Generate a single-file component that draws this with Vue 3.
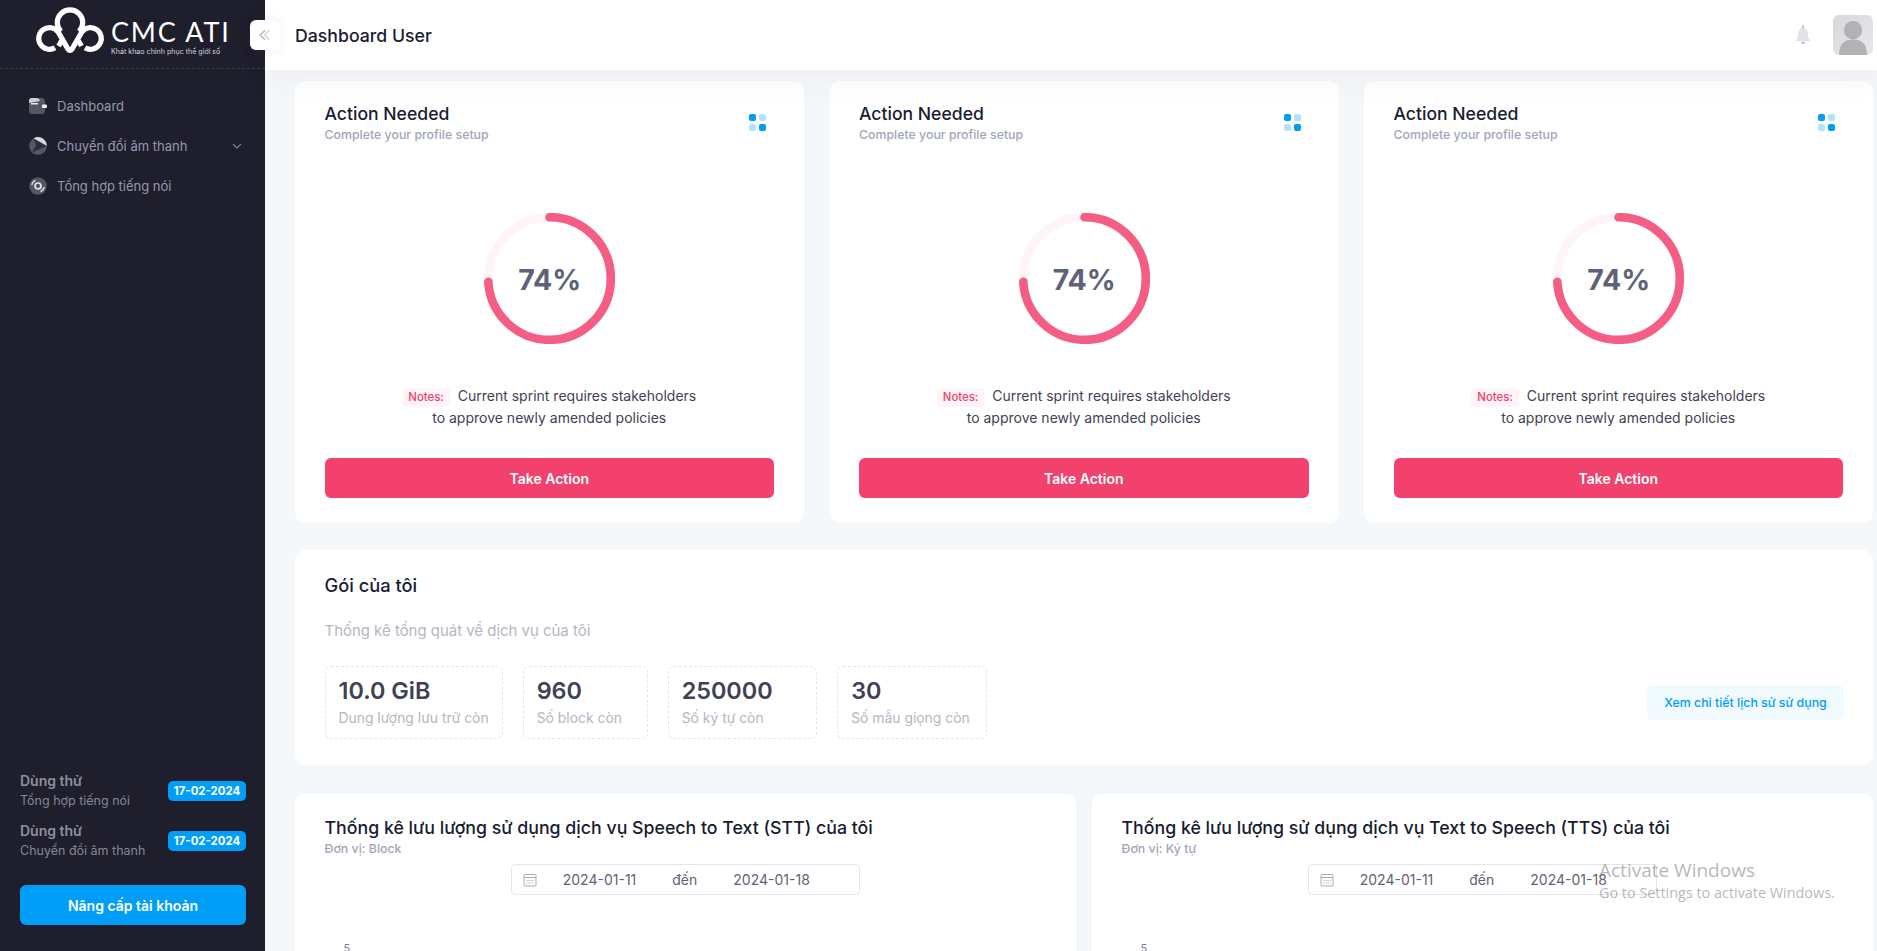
<script setup>
const actionCards = [1, 2, 3]
const stats = [
  { value: '10.0 GiB', label: 'Dung lượng lưu trữ còn' },
  { value: '960', label: 'Số block còn' },
  { value: '250000', label: 'Số ký tự còn' },
  { value: '30', label: 'Số mẫu giọng còn' }
]
const trials = [
  { title: 'Dùng thử', name: 'Tổng hợp tiếng nói', date: '17-02-2024' },
  { title: 'Dùng thử', name: 'Chuyển đổi âm thanh', date: '17-02-2024' }
]
const charts = [
  { title: 'Thống kê lưu lượng sử dụng dịch vụ Speech to Text (STT) của tôi', unit: 'Đơn vị: Block' },
  { title: 'Thống kê lưu lượng sử dụng dịch vụ Text to Speech (TTS) của tôi', unit: 'Đơn vị: Ký tự' }
]
const radius = 61.3
const circumference = 2 * Math.PI * radius
const dash = `${circumference * 0.74} ${circumference}`
</script>

<template>
  <div class="app">
    <aside class="sidebar">
      <div class="brand">
        <svg class="logo-mark" viewBox="0 0 66 44" fill="none" stroke="#fff" stroke-width="5.2" stroke-linecap="butt">
          <path d="M24 22.5 A12.7 12.7 0 1 1 42 22.5" />
          <path d="M18 38.8 A10.8 10.8 0 1 1 21 22.8 L31 40 Q33 43 35 40 L45 22.8 A10.8 10.8 0 1 1 48 38.8" />
          <path d="M24.5 32 L21.5 37" />
          <path d="M41.5 32 L44.5 37" />
        </svg>
        <div class="logo-text">
          <div class="logo-name">CMC ATI</div>
          <div class="logo-slogan">Khát khao chinh phục thế giới số</div>
        </div>
      </div>
      <nav class="nav">
        <div class="nav-item">
          <svg class="nav-icon" viewBox="0 0 18 18">
            <rect x="0" y="1" width="16" height="16" rx="3.5" fill="#565766" />
            <path d="M0 6 V4 Q0 1 3 1 L8 1 Q10 1 11 4 Z" fill="#cfd0da" />
            <rect x="2" y="6" width="7" height="1.5" fill="#e7e7ec" />
            <rect x="13" y="7.5" width="5" height="3.5" rx="1" fill="#f2f2f5" />
          </svg>
          <span>Dashboard</span>
        </div>
        <div class="nav-item">
          <svg class="nav-icon" viewBox="0 0 18 18">
            <circle cx="9" cy="9" r="8.8" fill="#565766" />
            <path d="M4.5 1.4 A8.8 8.8 0 0 1 17.8 9 Z" fill="#d7d8e2" />
            <path d="M4.5 1.4 L17.8 9 L3 15.5 L7 8.5 Z" fill="#2f303d" />
          </svg>
          <span class="nav-label">Chuyển đổi âm thanh</span>
          <svg class="nav-chevron" viewBox="0 0 10 6" fill="none" stroke="#7e8093" stroke-width="1.2">
            <path d="M1 1 L5 5 L9 1" />
          </svg>
        </div>
        <div class="nav-item">
          <svg class="nav-icon" viewBox="0 0 18 18" fill="none">
            <circle cx="9" cy="9" r="8.8" fill="#565766" />
            <circle cx="9" cy="9" r="3" stroke="#e5e5ea" stroke-width="1.7" />
            <path d="M2.8 8 A6.3 6.3 0 0 1 6.5 3.4" stroke="#d7d8e2" stroke-width="1.4" />
            <path d="M15.2 10 A6.3 6.3 0 0 1 11.5 14.6" stroke="#d7d8e2" stroke-width="1.4" />
          </svg>
          <span>Tổng hợp tiếng nói</span>
        </div>
      </nav>
      <div class="side-bottom">
        <div v-for="t in trials" :key="t.name" class="trial">
          <div>
            <div class="trial-title">{{ t.title }}</div>
            <div class="trial-name">{{ t.name }}</div>
          </div>
          <span class="trial-date">{{ t.date }}</span>
        </div>
        <button class="upgrade">Nâng cấp tài khoản</button>
      </div>
    </aside>

    <div class="main">
      <header class="header">
        <button class="collapse">
          <svg viewBox="0 0 14 14" fill="none" stroke="#b5b5c3" stroke-width="1.6">
            <path d="M7 1.5 L1.5 7 L7 12.5" />
            <path d="M12 1.5 L6.5 7 L12 12.5" stroke="#cfd0dc" />
          </svg>
        </button>
        <h1 class="page-title">Dashboard User</h1>
        <div class="header-right">
          <svg class="bell" viewBox="0 0 18 22">
            <rect x="8" y="0" width="2" height="4" fill="#b9bac6" />
            <path d="M9 3 C4.5 3 3.5 7 3.5 11 C3.5 14 2 15.5 1 17 Q0.5 18 2 18 L16 18 Q17.5 18 17 17 C16 15.5 14.5 14 14.5 11 C14.5 7 13.5 3 9 3 Z" fill="#e2e3ea" />
            <rect x="7" y="19" width="4" height="1.6" rx=".8" fill="#a9aab8" />
          </svg>
          <div class="avatar">
            <svg viewBox="0 0 40 40">
              <circle cx="20" cy="15" r="9.2" fill="#b1b2b5" />
              <path d="M6 40 C6 28 12 24.5 20 24.5 C28 24.5 34 28 34 40 Z" fill="#b1b2b5" />
            </svg>
          </div>
        </div>
      </header>

      <main class="content">
        <section class="action-grid">
          <article v-for="c in actionCards" :key="c" class="card action-card">
            <div class="action-head">
              <div>
                <h2 class="card-title">Action Needed</h2>
                <p class="card-sub">Complete your profile setup</p>
              </div>
              <div class="dots">
                <i class="dot-dark"></i><i class="dot-light"></i>
                <i class="dot-light"></i><i class="dot-dark"></i>
              </div>
            </div>
            <div class="ring">
              <svg viewBox="0 0 131 131" fill="none">
                <circle cx="65.5" cy="65.5" :r="radius" stroke="#fff5f8" stroke-width="8.6" />
                <circle
                  cx="65.5" cy="65.5" :r="radius" stroke="#f45e84" stroke-width="8.6"
                  stroke-linecap="round" :stroke-dasharray="dash"
                  transform="rotate(-90 65.5 65.5)"
                />
              </svg>
              <span class="ring-value">74%</span>
            </div>
            <p class="notes">
              <span class="notes-badge">Notes:</span>
              Current sprint requires stakeholders<br />to approve newly amended policies
            </p>
            <button class="take-action">Take Action</button>
          </article>
        </section>

        <section class="card plan">
          <h2 class="card-title plan-title">Gói của tôi</h2>
          <p class="plan-sub">Thống kê tổng quát về dịch vụ của tôi</p>
          <div class="plan-row">
            <div class="stats">
              <div v-for="s in stats" :key="s.label" class="stat">
                <div class="stat-value">{{ s.value }}</div>
                <div class="stat-label">{{ s.label }}</div>
              </div>
            </div>
            <button class="history">Xem chi tiết lịch sử sử dụng</button>
          </div>
        </section>

        <section class="chart-grid">
          <article v-for="c in charts" :key="c.unit" class="card chart-card">
            <h2 class="card-title chart-title">{{ c.title }}</h2>
            <p class="card-sub chart-unit">{{ c.unit }}</p>
            <div class="date-range">
              <svg class="cal" viewBox="0 0 14 14" fill="none" stroke="#a9abb8" stroke-width="1">
                <rect x="1" y="1.5" width="12" height="11.5" rx=".5" />
                <path d="M1 4.5 H13" />
                <path d="M3.5 7.5 H10.5 M3.5 10 H10.5" stroke-dasharray="1 1" />
              </svg>
              <span>2024-01-11</span>
              <span>đến</span>
              <span>2024-01-18</span>
            </div>
            <div class="axis-label">5</div>
          </article>
        </section>
      </main>
    </div>

    <div class="activate">
      <div class="activate-title">Activate Windows</div>
      <div class="activate-sub">Go to Settings to activate Windows.</div>
    </div>
  </div>
</template>

<style>
html, body { margin: 0; overflow: hidden; }
</style>

<style scoped>
.app {
  position: relative;
  display: flex;
  height: 951px;
  overflow: hidden;
  font-family: Inter, "Noto Sans", sans-serif;
  background: #f5f8fa;
  color: #181c32;
}
h1, h2, p { margin: 0; }
button { font-family: inherit; border: 0; cursor: pointer; }

.sidebar {
  flex: 0 0 265px;
  display: flex;
  flex-direction: column;
  background: #1e1e2d;
}
.brand {
  height: 69px;
  box-sizing: border-box;
  border-bottom: 1px dashed #393945;
  display: flex;
  padding: 9px 0 0 37px;
  gap: 8px;
}
.logo-mark { width: 66px; height: 44px; overflow: visible; }
.logo-text { color: #fff; }
.logo-name {
  font-family: Lato, sans-serif;
  font-size: 27px;
  line-height: 26px;
  margin-top: 10px;
  font-weight: 400;
  letter-spacing: 1.8px;
  white-space: nowrap;
}
.logo-slogan {
  font-size: 7.1px;
  line-height: 9px;
  margin-top: 2px;
  color: #d5d5dc;
  white-space: nowrap;
}
.nav { padding-top: 17px; }
.nav-item {
  display: flex;
  align-items: center;
  height: 40px;
  padding: 0 23px 0 29px;
  color: #9899ac;
  font-size: 13px;
}
.nav-icon { width: 18px; height: 18px; margin-right: 10px; flex: none; }
.nav-label { flex: 1; }
.nav-chevron { width: 10px; height: 6px; }

.side-bottom { margin-top: auto; padding: 0 19px 26px 20px; }
.trial {
  display: flex;
  align-items: center;
  justify-content: space-between;
  margin-bottom: 9px;
  height: 41px;
}
.trial-title { font-size: 14px; font-weight: 600; color: #8e8f9e; line-height: 20px; }
.trial-name { font-size: 12.5px; color: #858696; line-height: 19px; }
.trial-date {
  background: #009ef7;
  color: #fff;
  font-size: 11.4px;
  font-weight: 700;
  border-radius: 5px;
  width: 78px;
  height: 20px;
  line-height: 20px;
  text-align: center;
}
.upgrade {
  display: block;
  width: 100%;
  height: 40px;
  margin-top: 24px;
  background: #009ef7;
  color: #fff;
  font-size: 14px;
  font-weight: 600;
  border-radius: 6px;
}

.main { flex: 1; min-width: 0; display: flex; flex-direction: column; }
.header {
  position: relative;
  z-index: 2;
  flex: 0 0 70px;
  display: flex;
  align-items: center;
  padding: 0 4px 0 30px;
  background: #fff;
  box-shadow: 0 10px 30px rgba(82, 63, 105, .05);
}
.collapse {
  position: absolute;
  left: -15px;
  top: 20px;
  width: 30px;
  height: 30px;
  padding: 0;
  background: #fff;
  border-radius: 6px;
  display: flex;
  align-items: center;
  justify-content: center;
  box-shadow: 0 0 10px rgba(76, 87, 125, .1);
}
.collapse svg { width: 12px; height: 12px; }
.page-title { font-size: 17.7px; font-weight: 500; color: #181c32; }
.header-right { margin-left: auto; display: flex; align-items: center; gap: 22px; }
.bell { width: 16px; height: 20px; }
.avatar {
  width: 40px;
  height: 40px;
  border-radius: 6px;
  overflow: hidden;
  background: linear-gradient(135deg, #d8d8da 0%, #e9e9eb 100%);
}
.avatar svg { display: block; width: 40px; height: 40px; }

.content { flex: 1; overflow: hidden; padding: 11px 4px 0 30px; }
.card { background: #fff; border-radius: 10px; }

.action-grid { display: grid; grid-template-columns: repeat(3, 1fr); gap: 25.5px; }
.action-card {
  display: flex;
  flex-direction: column;
  height: 442px;
  box-sizing: border-box;
  padding: 22px 30px 25px 29.5px;
}
.action-head { display: flex; justify-content: space-between; }
.card-title { font-size: 17.6px; font-weight: 500; line-height: 22px; color: #181c32; }
.card-sub { font-size: 12.35px; font-weight: 500; line-height: 20px; color: #a1a5b7; }
.dots {
  display: grid;
  grid-template-columns: 7px 7px;
  grid-auto-rows: 7px;
  gap: 3px;
  margin: 11px 8px 0 0;
}
.dots i { border-radius: 2px; }
.dot-dark { background: #009ef7; }
.dot-light { background: #b3e2fd; }

.ring {
  position: relative;
  width: 131px;
  height: 131px;
  margin: 68px 0 0 calc(50% - 65px);
}
.ring svg { display: block; width: 131px; height: 131px; }
.ring-value {
  position: absolute;
  inset: 0;
  display: flex;
  align-items: center;
  justify-content: center;
  padding-top: 1px;
  font-size: 28.5px;
  font-weight: 700;
  color: #5e6278;
}
.notes {
  margin-top: 41px;
  font-size: 14px;
  line-height: 21px;
  text-align: center;
  color: #3f4254;
}
.notes-badge {
  display: inline-block;
  margin-right: 4px;
  padding: 0 6px;
  line-height: 19px;
  font-size: 11.4px;
  font-weight: 500;
  color: #f1416c;
  background: #fff5f8;
  border-radius: 4px;
}
.take-action {
  margin-top: auto;
  height: 40px;
  background: #f1416c;
  color: #fff;
  font-size: 14px;
  font-weight: 600;
  border-radius: 6px;
}

.plan {
  margin-top: 27px;
  height: 215px;
  box-sizing: border-box;
  padding: 24px 29px 0 29.5px;
}
.plan-title { font-size: 18.3px; }
.plan-sub { margin-top: 24px; font-size: 14.95px; line-height: 22px; color: #b5b5c3; }
.plan-row { display: flex; align-items: center; justify-content: space-between; margin-top: 24px; }
.stats { display: flex; gap: 20px; }
.stat {
  box-sizing: border-box;
  height: 73px;
  min-width: 125px;
  padding: 9px 13px 0;
  border: 1px dashed #e4e6ef;
  border-radius: 6px;
}
.stat:nth-child(n+3) { min-width: 149.5px; }
.stat-value { font-size: 23.4px; font-weight: 600; line-height: 29px; color: #3f4254; }
.stat-label { font-size: 13.9px; line-height: 22px; margin-top: 2px; color: #b5b5c3; white-space: nowrap; }
.history {
  width: 197px;
  height: 35px;
  background: #f1faff;
  color: #009ef7;
  font-size: 12.35px;
  font-weight: 500;
  border-radius: 6px;
}

.chart-grid { display: grid; grid-template-columns: 1fr 1fr; gap: 16px; margin-top: 29px; }
.chart-card { height: 300px; box-sizing: border-box; padding: 23px 30px 0 29.5px; }
.chart-title { font-size: 17.75px; line-height: 22px; }
.chart-unit { font-size: 12.35px; line-height: 16px; margin-top: 2px; }
.date-range {
  width: 349px;
  height: 31px;
  box-sizing: border-box;
  margin: 7px auto 0;
  display: flex;
  align-items: center;
  gap: 36px;
  padding-left: 11px;
  border: 1px solid #e4e6ef;
  border-radius: 4px;
  font-size: 14px;
  color: #5e6278;
}
.cal { width: 14px; height: 14px; margin-right: -10px; }
.axis-label { margin: 45px 0 0 19px; font-size: 11px; line-height: 16px; color: #7e8299; }

.activate {
  position: absolute;
  left: 1599px;
  top: 857px;
  z-index: 3;
  font-family: "Open Sans", sans-serif;
  color: rgba(110, 110, 110, .5);
  pointer-events: none;
  white-space: nowrap;
}
.activate-title { font-size: 19px; line-height: 26px; }
.activate-sub { font-size: 14.4px; line-height: 18px; margin-top: 1px; }
</style>
